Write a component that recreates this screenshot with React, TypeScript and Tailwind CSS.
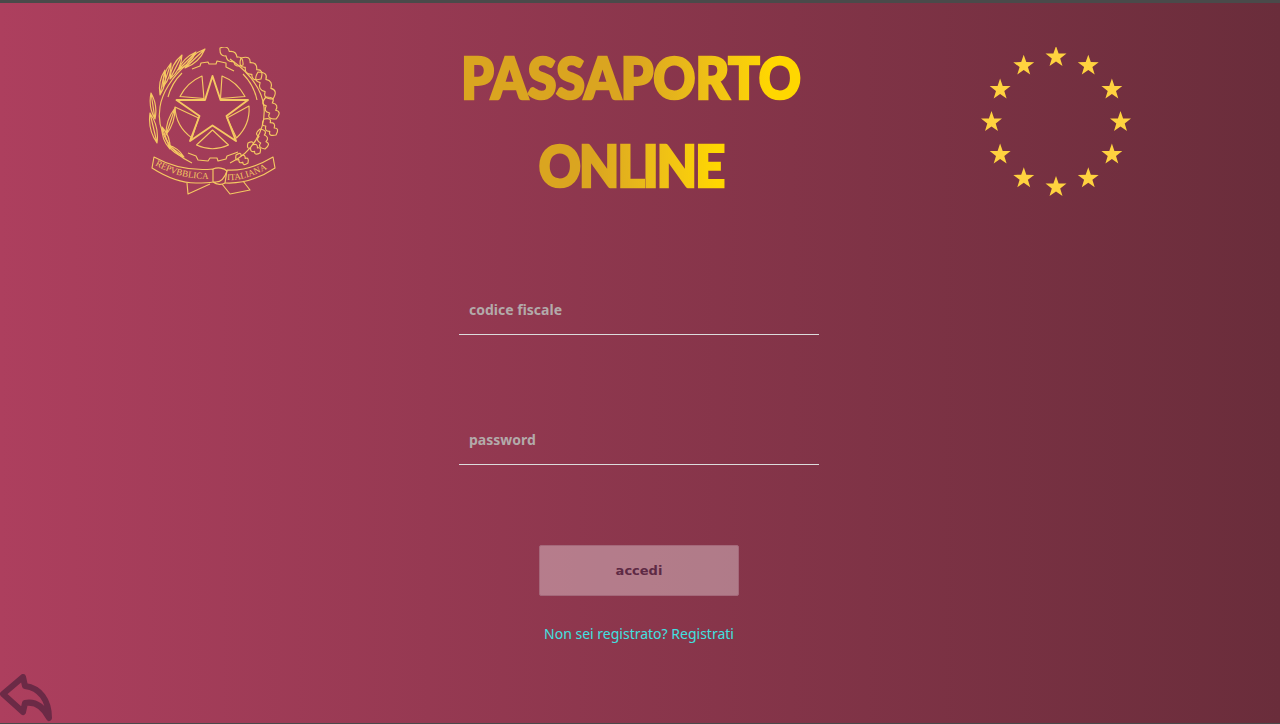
type P = [number, number];

const starPoints = (cx: number, cy: number, r: number) => {
  const pts: string[] = [];
  for (let i = 0; i < 10; i++) {
    const rad = i % 2 === 0 ? r : r * 0.4;
    const a = (Math.PI / 5) * i - Math.PI / 2;
    pts.push(`${(cx + rad * Math.cos(a)).toFixed(1)},${(cy + rad * Math.sin(a)).toFixed(1)}`);
  }
  return pts.join(' ');
};

// lens shaped olive leaf with a midrib
const olive = (a: P, b: P, w: number) => {
  const mx = (a[0] + b[0]) / 2;
  const my = (a[1] + b[1]) / 2;
  const dx = b[0] - a[0];
  const dy = b[1] - a[1];
  const l = Math.hypot(dx, dy);
  const nx = (-dy / l) * w;
  const ny = (dx / l) * w;
  return `M${a[0]} ${a[1]} Q${mx + nx} ${my + ny} ${b[0]} ${b[1]} Q${mx - nx} ${my - ny} ${a[0]} ${a[1]} Z M${a[0]} ${a[1]} L${b[0]} ${b[1]}`;
};

// scalloped oak leaf along a to b
const oak = (a: P, b: P, w: number) => {
  const n = 3;
  const dx = b[0] - a[0];
  const dy = b[1] - a[1];
  const l = Math.hypot(dx, dy);
  const nx = (-dy / l) * w;
  const ny = (dx / l) * w;
  const at = (t: number, s: number) => `${(a[0] + dx * t + nx * s).toFixed(1)} ${(a[1] + dy * t + ny * s).toFixed(1)}`;
  let d = `M${a[0]} ${a[1]}`;
  for (let i = 0; i < n; i++) {
    const t = (i + 0.5) / n;
    const e = (i + 1) / n;
    d += ` Q${at(t, 1.5)} ${at(e, i === n - 1 ? 0 : 0.55)}`;
  }
  for (let i = n - 1; i >= 0; i--) {
    const t = (i + 0.5) / n;
    const e = i / n;
    d += ` Q${at(t, -1.5)} ${at(e, i === 0 ? 0 : -0.55)}`;
  }
  return `${d} Z`;
};

function EuStars() {
  return (
    <svg width="150" height="150" viewBox="0 0 150 150" className="shrink-0" fill="#ffd23f">
      {Array.from({ length: 12 }).map((_, i) => {
        const a = (Math.PI / 6) * i;
        return (
          <polygon
            key={i}
            points={starPoints(75 + 64.5 * Math.sin(a), 75 - 65 * Math.cos(a), 11)}
          />
        );
      })}
    </svg>
  );
}

const oliveLeaves: [P, P, number][] = [
  [[55, 33], [75, 14], 6],
  [[48, 35], [66, 17], 5],
  [[40, 44], [52, 20], 6],
  [[33, 52], [41, 28], 5],
  [[30, 60], [35, 35], 5],
  [[25, 84], [21, 58], 5],
  [[27, 108], [20, 78], 6],
  [[36, 100], [45, 73], 5],
  [[40, 114], [32, 92], 5],
  [[54, 122], [38, 110], 4],
];

const oakLeaves: [P, P, number][] = [
  [[113, 30], [90, 13], 5],
  [[131, 44], [111, 23], 6],
  [[143, 64], [128, 37], 6],
  [[146, 84], [136, 62], 6],
  [[146, 100], [134, 84], 5],
  [[135, 114], [130, 94], 5],
  [[130, 118], [118, 108], 4],
  [[118, 128], [106, 120], 4],
];

// coordinates are the reference crop at 1/3 scale
function Emblem() {
  return (
    <svg
      width="132"
      height="148"
      viewBox="18 12 132 148"
      className="shrink-0"
      fill="none"
      stroke="#f5c862"
      strokeWidth="1.15"
      strokeLinejoin="round"
    >
      {/* star */}
      <polygon
        strokeWidth="1.9"
        points="82.5,41 90.5,65 118,65 96.5,81 106,106 82.5,90.5 60,106 69.5,81 46.5,65 75,65"
      />
      {/* wheel segments */}
      <path d="M72 41 A44 44 0 0 0 50 61.5 L74 63.5 Z" />
      <path d="M92 41 A44 44 0 0 1 115 61.5 L90.5 63.5 Z" />
      <path d="M119 71 A40 40 0 0 1 106.5 103 L97 83 Z" />
      <path d="M45 72 A40 40 0 0 0 62 103 L68.5 83 Z" />
      <path d="M66.5 110 L82.5 95 L98.5 110 A38 38 0 0 1 66.5 110 Z" />
      {/* cog */}
      <path d="M62 34 L70 31 L71 28 L78 27 L79 29 L86 29 L87 26 L96 28 L96 32 L104 36" />
      <path d="M58 118 L66 121 L68 125 L78 126 L80 123 L87 123 L88 126 L96 124 L97 121 L108 117" />
      <path d="M113 39 A52 52 0 0 1 127 65" />
      <path d="M38 62 A52 52 0 0 1 52 38" />
      {/* olive branch */}
      <path d="M62 128 C40 118 26 95 30 72 C32 58 42 42 56 30" />
      {oliveLeaves.map(([a, b, w], i) => (
        <path key={i} d={olive(a, b, w)} />
      ))}
      {/* oak branch */}
      <path d="M100 128 C122 118 136 95 134 72 C132 55 120 38 100 24" />
      {oakLeaves.map(([a, b, w], i) => (
        <path key={i} d={oak(a, b, w)} />
      ))}
      {/* ribbon */}
      <path d="M24 122 L22 133 C36 142 50 148 66 148 C72 148 78 148 83 147 L83 134 C62 136 42 132 24 122 Z" />
      <path d="M143 122 L145 133 C130 143 112 149 95 148 L97 135 C112 136 128 131 143 122 Z" />
      <path d="M83 134 C88 132 94 133 97 136 C95 142 92 147 86 147 L83 147 M83 147 C87 150 92 150 95 148" />
      <path d="M57 148 L58 159 L80 149 M113 146 L120 155 L100 159 L92 149" />
      <path id="ribbon-l" d="M25 130 C42 140 60 145 90 144" stroke="none" />
      <path id="ribbon-r" d="M97 145 C112 146 128 140 150 126" stroke="none" />
      <text
        fill="#f5c862"
        stroke="none"
        fontSize="9"
        style={{ fontFamily: '"Liberation Serif", serif' }}
      >
        <textPath href="#ribbon-l">REPVBBLICA</textPath>
      </text>
      <text
        fill="#f5c862"
        stroke="none"
        fontSize="9"
        style={{ fontFamily: '"Liberation Serif", serif' }}
      >
        <textPath href="#ribbon-r">ITALIANA</textPath>
      </text>
    </svg>
  );
}

export default function App() {
  return (
    <div className="flex h-[724px] w-full flex-col overflow-hidden border-t-[3px] border-b border-t-[#4a4a4a] border-b-[#4a4a4a] bg-gradient-to-r from-[#ad3f5e] to-[#6a2d3b] font-['Noto_Sans',sans-serif]">
      <header className="flex items-start pl-[148px] pt-[30px]">
        <div className="mt-[14px]">
          <Emblem />
        </div>
        <h1 className="ml-[171px] flex w-[360px] shrink-0 flex-col items-center font-['Lato',sans-serif] text-[52px] leading-[88px] font-black [-webkit-text-stroke:2.5px_transparent]">
          <span className="scale-y-[1.08] bg-gradient-to-r from-[#daa520] from-50% to-[#ffd700] to-90% bg-clip-text px-1 text-transparent">
            PASSAPORTO
          </span>
          <span className="scale-y-[1.08] bg-gradient-to-r from-[#daa520] from-30% to-[#ffd700] to-95% bg-clip-text px-1 tracking-[-1.8px] text-transparent">
            ONLINE
          </span>
        </h1>
        <div className="ml-[170px] mt-[14px]">
          <EuStars />
        </div>
      </header>

      <form className="ml-[459px] mt-[76px] flex w-[360px] flex-col items-center">
        <input
          placeholder="codice fiscale"
          className="h-[50px] w-full border-b border-b-[#dcdcdc] bg-transparent px-[10px] text-[14px] font-bold text-white outline-none placeholder:text-[#b3aaaa]"
        />
        <input
          type="password"
          placeholder="password"
          className="mt-[80px] h-[50px] w-full border-b border-b-[#dcdcdc] bg-transparent px-[10px] text-[14px] font-bold text-white outline-none placeholder:text-[#b3aaaa]"
        />
        <button
          type="button"
          className="mt-[80px] h-[51px] w-[200px] rounded-[2px] border border-[#a5687a] bg-white/35 font-['DejaVu_Sans',sans-serif] text-[13px] font-bold text-[#5e2a45]"
        >
          accedi
        </button>
        <a href="#" className="mt-[28px] text-[14px] leading-5 text-[#40e0e0]">
          Non sei registrato? Registrati
        </a>
      </form>

      <button type="button" className="mt-auto mb-px w-[54px]">
        <svg
          width="54"
          height="50"
          viewBox="0 10 54 50"
          fill="none"
          stroke="#6b2a46"
          strokeWidth="6"
          strokeLinejoin="round"
          className="block"
        >
          <path d="M23 15 L3 32 L23 50 L25 41 C36 39 44 46 49 56 C49 38 40 26 25 24 Z" />
        </svg>
      </button>
    </div>
  );
}
